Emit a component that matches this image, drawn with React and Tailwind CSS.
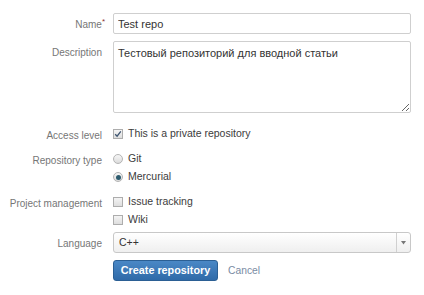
import React from "react";

const font = { fontFamily: '"Liberation Sans", Arial, sans-serif' };

const Label = ({ children, className = "" }) => (
  <div className={`w-[105px] shrink-0 text-right text-[10px] text-[#767676] pr-[3px] ${className}`}>
    {children}
  </div>
);

const Check = ({ checked }) => (
  <span className="inline-flex h-[10px] w-[10px] items-center justify-center border border-[#adadad] bg-gradient-to-b from-[#f4f4f4] to-[#dedede]">
    {checked && (
      <svg width="8" height="8" viewBox="0 0 8 8">
        <path d="M1.2 4.2 L3.1 6.2 L6.8 1.4" fill="none" stroke="#3d5470" strokeWidth="1.3" />
      </svg>
    )}
  </span>
);

const Radio = ({ checked }) => (
  <span className="inline-flex h-[10px] w-[10px] items-center justify-center rounded-full border border-[#b4b4b4] bg-gradient-to-b from-[#f6f6f6] to-[#dcdcdc]">
    {checked && <span className="h-[5px] w-[5px] rounded-full bg-[#2c5b6e]" />}
  </span>
);

const Option = ({ control, children }) => (
  <div className="flex h-[18px] items-center gap-[5px] text-[10.5px] text-[#3c3c3c]">
    {control}
    <span>{children}</span>
  </div>
);

export default function App() {
  return (
    <div className="h-[295px] w-[424px] bg-white" style={font}>
      <div className="flex flex-col pt-[13px] pr-[13px]">
        <div className="flex gap-[8px]">
          <Label className="pt-[4px] !pr-[0px]">
            Name<sup className="text-[8px] text-[#8a3030]">*</sup>
          </Label>
          <input
            defaultValue="Test repo"
            className="h-[21px] flex-1 rounded-[2px] border border-[#cfcfcf] px-[4px] text-[11px] text-[#333] outline-none"
            style={font}
          />
        </div>

        <div className="mt-[7px] flex gap-[8px]">
          <Label className="pt-[4px]">Description</Label>
          <textarea
            defaultValue="Тестовый репозиторий для вводной статьи"
            className="h-[72px] flex-1 rounded-[2px] border border-[#cfcfcf] px-[4px] py-[3px] text-[11px] text-[#333] outline-none"
            style={font}
          />
        </div>

        <div className="mt-[12px] flex gap-[8px]">
          <Label className="pt-[3px]">Access level</Label>
          <div>
            <Option control={<Check checked />}>This is a private repository</Option>
          </div>
        </div>

        <div className="mt-[7px] flex gap-[8px]">
          <Label className="pt-[3px]">Repository type</Label>
          <div>
            <Option control={<Radio />}>Git</Option>
            <Option control={<Radio checked />}>Mercurial</Option>
          </div>
        </div>

        <div className="mt-[7px] flex gap-[8px]">
          <Label className="pt-[3px]">Project management</Label>
          <div>
            <Option control={<Check />}>Issue tracking</Option>
            <Option control={<Check />}>Wiki</Option>
          </div>
        </div>

        <div className="mt-[3px] flex gap-[8px]">
          <Label className="pt-[4px]">Language</Label>
          <div className="flex h-[21px] flex-1 items-stretch rounded-[3px] border border-[#c8c8c8] bg-gradient-to-b from-white to-[#efefef] text-[10.5px] text-[#333]">
            <div className="flex flex-1 items-center px-[5px]">C++</div>
            <div className="flex w-[14px] items-center justify-center border-l border-[#d0d0d0]">
              <svg width="5" height="4" viewBox="0 0 5 4">
                <path d="M0 0 L5 0 L2.5 3.5 Z" fill="#777" />
              </svg>
            </div>
          </div>
        </div>

        <div className="mt-[7px] flex items-center gap-[10px] pl-[113px]">
          <button
            className="h-[21px] w-[105px] rounded-[3px] border border-[#2b5f94] bg-gradient-to-b from-[#4a88c6] to-[#2f6aa8] text-[10.8px] font-bold text-white"
            style={font}
          >
            Create repository
          </button>
          <span className="text-[10.3px] text-[#7a8ca4]">Cancel</span>
        </div>
      </div>
    </div>
  );
}
